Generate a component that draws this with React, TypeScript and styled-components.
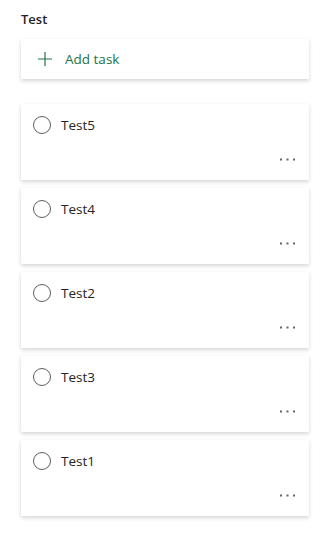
import styled, { createGlobalStyle } from "styled-components";

const GlobalStyle = createGlobalStyle`
  html, body {
    margin: 0;
    padding: 0;
    background: #ffffff;
  }
  body {
    font-family: "Open Sans", "Noto Sans", sans-serif;
    color: #323130;
  }
`

const Page = styled.div`
  width: 332px;
  padding: 9px 23px 20px 21px;
  box-sizing: border-box;
`

const Title = styled.div`
  font-size: 13px;
  font-weight: 600;
  line-height: 20px;
  color: #252423;
  margin-bottom: 10px;
`

const Card = styled.div<{ $height: number }>`
  background: #ffffff;
  height: ${(p) => p.$height}px;
  box-sizing: border-box;
  box-shadow: 0 1.6px 4px 0 rgba(0, 0, 0, 0.17), 0 0.3px 0.9px 0 rgba(0, 0, 0, 0.12);
`

const AddCard = styled(Card)`
  display: flex;
  align-items: center;
  padding-left: 16px;
  gap: 12px;
  margin-bottom: 25px;
  color: #217346;
  font-size: 13.5px;
`

const TaskList = styled.div`
  display: flex;
  flex-direction: column;
  gap: 8px;
`

const TaskCard = styled(Card)`
  display: flex;
  flex-direction: column;
  justify-content: space-between;
  padding: 12px 13px 19px 12px;
`

const TaskRow = styled.div`
  display: flex;
  align-items: center;
  gap: 10px;
`

const Circle = styled.span`
  width: 18px;
  height: 18px;
  border-radius: 50%;
  border: 1px solid #605e5c;
  box-sizing: border-box;
  flex-shrink: 0;
`

const TaskName = styled.span`
  font-size: 13.5px;
  line-height: 18px;
  color: #252423;
`

const MoreRow = styled.div`
  display: flex;
  justify-content: flex-end;
`

function PlusIcon() {
  return (
    <svg width="16" height="16" viewBox="0 0 16 16">
      <path d="M8 1 V15 M1 8 H15" stroke="#217346" strokeWidth="1.2" fill="none" />
    </svg>
  );
}

function MoreIcon() {
  return (
    <svg width="16" height="3" viewBox="0 0 16 3">
      <rect x="0" y="0.5" width="2" height="2" fill="#65646a" />
      <rect x="6.5" y="0.5" width="2" height="2" fill="#65646a" />
      <rect x="13" y="0.5" width="2" height="2" fill="#65646a" />
    </svg>
  );
}

const tasks = ["Test5", "Test4", "Test2", "Test3", "Test1"];

function App() {
  return (
    <>
      <GlobalStyle />
      <Page>
        <Title>Test</Title>
        <AddCard $height={40}>
          <PlusIcon />
          <span>Add task</span>
        </AddCard>
        <TaskList>
          {tasks.map((t) => (
            <TaskCard key={t} $height={76}>
              <TaskRow>
                <Circle />
                <TaskName>{t}</TaskName>
              </TaskRow>
              <MoreRow>
                <MoreIcon />
              </MoreRow>
            </TaskCard>
          ))}
        </TaskList>
      </Page>
    </>
  );
}

export default App;
